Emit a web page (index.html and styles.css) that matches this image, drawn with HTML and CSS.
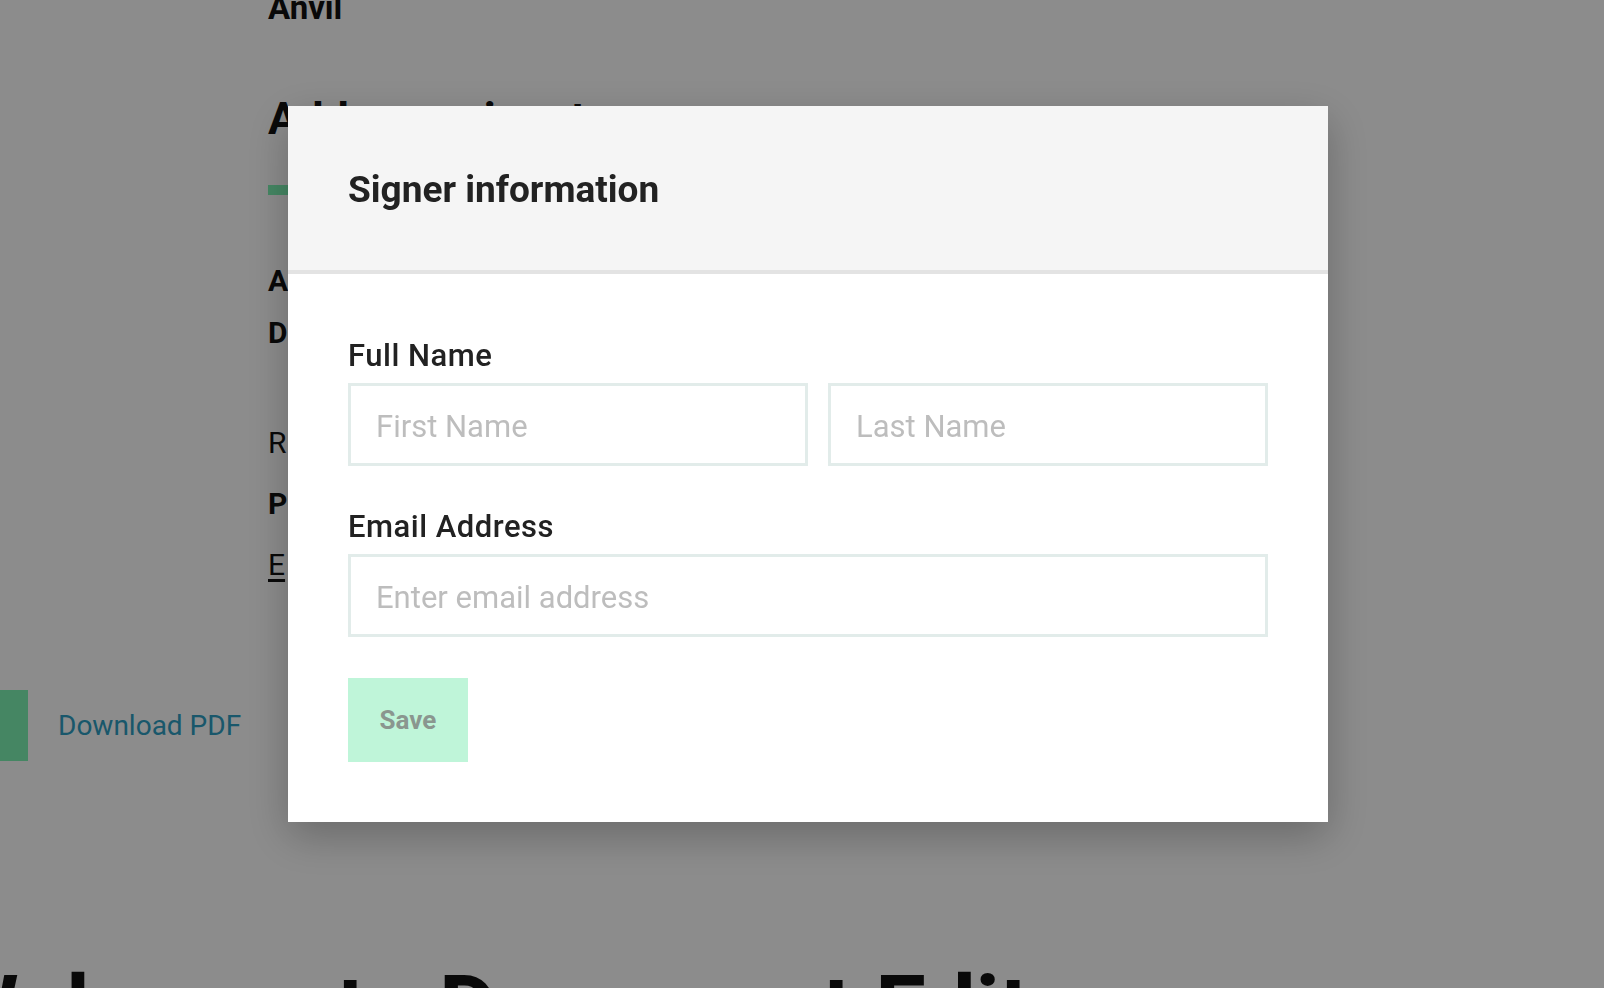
FILE: index.html
```html
<!DOCTYPE html>
<html lang="en">
<head>
<meta charset="utf-8">
<title>Signer information</title>
<link rel="stylesheet" href="styles.css">
</head>
<body>
<div class="page">
  <section class="content">
    <div class="brand">Anvil</div>
    <h1 class="title">Add your signature</h1>
    <div class="rule"></div>
    <p class="line strong">A ready-to-sign packet</p>
    <p class="line strong">D ocument details</p>
    <p class="line plain gap-lg">R eview before signing</p>
    <p class="line strong gap-sm">P ackets</p>
    <p class="line gap-sm"><a class="link" href="#">E</a> dit signers</p>
  </section>
  <div class="actions">
    <button class="primary" type="button">Continue</button>
    <a class="download" href="#">Download PDF</a>
  </div>
  <h2 class="welcome">Welcome to Document Editor</h2>
</div>

<div class="overlay">
  <div class="modal" role="dialog" aria-labelledby="modal-title">
    <div class="modal-header">
      <h3 class="modal-title" id="modal-title">Signer information</h3>
    </div>
    <form class="modal-body">
      <div class="field">
        <label class="label">Full Name</label>
        <div class="name-row">
          <input class="input" type="text" placeholder="First Name">
          <input class="input" type="text" placeholder="Last Name">
        </div>
      </div>
      <div class="field">
        <label class="label">Email Address</label>
        <input class="input wide" type="email" placeholder="Enter email address">
      </div>
      <button class="save" type="button">Save</button>
    </form>
  </div>
</div>
</body>
</html>
```

FILE: styles.css
```css
* { box-sizing: border-box; }

html, body {
  margin: 0;
  padding: 0;
  background: #ffffff;
  overflow: hidden;
  height: 100%;
}

body {
  font-family: "Roboto", "Liberation Sans", sans-serif;
  color: #111111;
}

.page {
  width: 1604px;
  height: 988px;
  overflow: hidden;
}

.content {
  margin-left: 268px;
  display: flex;
  flex-direction: column;
  align-items: flex-start;
}

.brand {
  margin-top: -8px;
  font-size: 33px;
  line-height: 32px;
  font-weight: 700;
}

.title {
  margin: 68px 0 0;
  font-size: 45px;
  line-height: 54px;
  font-weight: 700;
}

.rule {
  margin-top: 39px;
  width: 90px;
  height: 10px;
  background: #7ef5b5;
}

.line {
  margin: 0;
  font-size: 30px;
  line-height: 52px;
  word-spacing: 14px;
}

.line:first-of-type { margin-top: 60px; }

.strong { font-weight: 700; }
.plain { font-weight: 400; }
.gap-lg { margin-top: 58px; }
.gap-sm { margin-top: 9px; }

.link {
  color: #111111;
  text-decoration: underline;
  text-underline-offset: 4px;
}

.actions {
  margin-top: 99px;
  display: flex;
  align-items: center;
  gap: 30px;
  height: 71px;
}

.primary {
  margin-left: -140px;
  width: 168px;
  height: 71px;
  border: 0;
  background: #7ef5b5;
  font-family: inherit;
  font-size: 26px;
  font-weight: 700;
  color: #111;
}

.download {
  font-size: 28px;
  color: #2f9fc4;
  text-decoration: none;
}

.welcome {
  margin: 194px 0 0 -60px;
  font-size: 90px;
  line-height: 110px;
  font-weight: 700;
  white-space: nowrap;
}

/* Modal */
.overlay {
  position: fixed;
  inset: 0;
  background: rgba(0, 0, 0, 0.45);
  padding: 106px 0 0 288px;
}

.modal {
  width: 1040px;
  background: #ffffff;
  box-shadow: 0 14px 40px rgba(0, 0, 0, 0.25);
}

.modal-header {
  height: 168px;
  padding: 4px 60px 0;
  display: flex;
  align-items: center;
  background: #f5f5f5;
  border-bottom: 4px solid #e3e3e3;
}

.modal-title {
  margin: 0;
  font-size: 37px;
  line-height: 36px;
  font-weight: 700;
  color: #222222;
}

.modal-body {
  margin: 0;
  padding: 64px 60px 60px;
  display: flex;
  flex-direction: column;
  align-items: flex-start;
}

.field {
  display: flex;
  flex-direction: column;
  margin-bottom: 43px;
}

.field + .field { margin-bottom: 41px; }

.label {
  display: block;
  font-size: 31px;
  line-height: 36px;
  font-weight: 500;
  letter-spacing: 0.5px;
  color: #222222;
  margin-bottom: 9px;
}

.name-row {
  display: grid;
  grid-template-columns: 460px 440px;
  gap: 20px;
}

.input {
  display: block;
  height: 83px;
  margin: 0;
  padding: 3px 25px 0;
  border: 3px solid #e2ecea;
  border-radius: 0;
  background: #ffffff;
  font-family: "Roboto", "Liberation Sans", sans-serif;
  font-size: 31px;
  color: #222222;
  outline: none;
}

.input::placeholder { color: #bdbdbd; }

.wide { width: 920px; }

.save {
  width: 120px;
  height: 84px;
  padding: 0;
  border: 0;
  border-radius: 0;
  background: #bff5d9;
  font-family: "Roboto", "Liberation Sans", sans-serif;
  font-size: 26px;
  font-weight: 700;
  color: #8a968f;
}
```
